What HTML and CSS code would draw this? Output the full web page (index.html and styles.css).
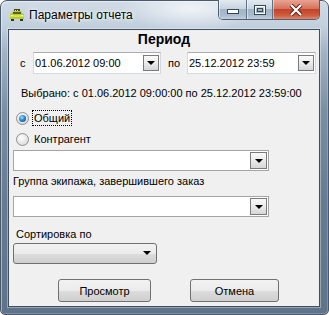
FILE: index.html
```html
<!DOCTYPE html>
<html lang="ru">
<head>
    <meta charset="UTF-8">
    <title>Параметры отчета</title>
    <link rel="stylesheet" href="styles.css">
</head>
<body>
    <div class="window">
        <div class="titlebar">
            <svg class="app-icon" width="16" height="12" viewBox="0 0 16 12">
                <rect x="5" y="0" width="6" height="3" fill="#3d4a1a"/>
                <rect x="6" y="1" width="1" height="1" fill="#e8f070"/>
                <rect x="8" y="1" width="1" height="1" fill="#e8f070"/>
                <path d="M3 4 L4 2 L12 2 L13 4 L15 5 L15 10 L1 10 L1 5 Z" fill="#b9cc2c"/>
                <rect x="4" y="3" width="8" height="2" fill="#55652a"/>
                <rect x="1" y="6" width="14" height="2" fill="#d4e24c"/>
                <rect x="2" y="6" width="2" height="1" fill="#f6f7c0"/>
                <rect x="12" y="6" width="2" height="1" fill="#f6f7c0"/>
                <rect x="2" y="10" width="3" height="2" fill="#2f3a22"/>
                <rect x="11" y="10" width="3" height="2" fill="#2f3a22"/>
            </svg>
            <span class="title">Параметры отчета</span>
            <div class="caption-buttons">
                <div class="cap-btn cap-min">
                    <svg width="12" height="6" viewBox="0 0 12 6"><rect x="0.5" y="0.5" width="11" height="4" fill="#fff" stroke="#33475b"/></svg>
                </div>
                <div class="cap-btn cap-max">
                    <svg width="12" height="10" viewBox="0 0 12 10"><rect x="0.5" y="0.5" width="11" height="9" fill="none" stroke="#33475b"/><rect x="1.5" y="1.5" width="9" height="7" fill="none" stroke="#fff"/><rect x="3.5" y="3.5" width="5" height="3" fill="none" stroke="#33475b"/></svg>
                </div>
                <div class="cap-btn cap-close">
                    <svg width="14" height="12" viewBox="0 0 14 12"><path d="M2 1 L12 11 M12 1 L2 11" stroke="#5a1d14" stroke-width="4"/><path d="M2 1 L12 11 M12 1 L2 11" stroke="#fff" stroke-width="2.2"/></svg>
                </div>
            </div>
        </div>

        <div class="client">
            <h2 class="period">Период</h2>

            <div class="date-row">
                <span class="lbl lbl-from">с</span>
                <div class="date-box"><span>01.06.2012 09:00</span><span class="drop-btn"></span></div>
                <span class="lbl lbl-to">по</span>
                <div class="date-box date-box-to"><span>25.12.2012 23:59</span><span class="drop-btn"></span></div>
            </div>

            <p class="selected">Выбрано: с 01.06.2012 09:00:00 по 25.12.2012 23:59:00</p>

            <div class="radio checked"><span class="dot"></span><span class="radio-text focus">Общий</span></div>
            <div class="radio radio-second"><span class="dot"></span><span class="radio-text">Контрагент</span></div>

            <div class="combo combo-client"><span class="drop-btn"></span></div>

            <p class="caption">Группа экипажа, завершившего заказ</p>
            <div class="combo combo-group"><span class="drop-btn"></span></div>

            <p class="caption caption-sort">Сортировка по</p>
            <div class="dropdown"><span class="arrow"></span></div>

            <div class="actions">
                <button class="btn btn-view">Просмотр</button>
                <button class="btn btn-cancel">Отмена</button>
            </div>
        </div>
    </div>
</body>
</html>
```

FILE: styles.css
```css
html, body {
    margin: 0;
    padding: 0;
    background: #fff;
}
body {
    font-family: 'Liberation Sans', Arial, sans-serif;
    font-size: 11px;
    color: #000;
}
.window {
    box-sizing: border-box;
    width: 329px;
    height: 315px;
    padding: 0 8px 7px 7px;
    display: flex;
    flex-direction: column;
    border: 1px solid #4a5a6c;
    border-radius: 7px 7px 5px 5px;
    background:
        radial-gradient(ellipse 70px 22px at 190px 8px, rgba(255, 255, 255, 0.7), rgba(255, 255, 255, 0) 100%),
        linear-gradient(to bottom, #d0dbe6 0, #c1cfdd 26px, #a3b4c6 50px, #7a8ea3 110px, #667b91 200px, #5f7489 100%);
    box-shadow: inset 1px 1px 0 rgba(255, 255, 255, 0.45), inset -1px -1px 0 rgba(255, 255, 255, 0.2);
}

/* title bar */
.titlebar {
    height: 28px;
    display: flex;
    align-items: flex-start;
    flex-shrink: 0;
}
.app-icon {
    margin: 8px 0 0 1px;
}
.title {
    margin: 6px 0 0 4px;
    font-size: 12px;
    line-height: 16px;
    color: #000;
    text-shadow: 0 0 6px #fff, 0 0 3px #fff;
}
.caption-buttons {
    margin: -1px 0 0 auto;
    display: flex;
    height: 19px;
    border: 1px solid #4f6073;
    border-top: none;
    border-radius: 0 0 5px 5px;
    overflow: hidden;
}
.cap-btn {
    height: 19px;
    display: flex;
    align-items: center;
    justify-content: center;
    box-shadow: inset 1px 0 0 rgba(255, 255, 255, 0.5);
}
.cap-min,
.cap-max {
    border-right: 1px solid #5f7184;
    background: linear-gradient(to bottom, #e2e9f0 0, #c8d4e0 45%, #a3b5c8 50%, #aabbcd 80%, #c3d0dd 100%);
}
.cap-min {
    width: 28px;
    padding-top: 5px;
    box-sizing: border-box;
}
.cap-max {
    width: 25px;
}
.cap-close {
    width: 46px;
    background: linear-gradient(to bottom, #e8a493 0, #d7735c 45%, #c2432b 50%, #cf5a3c 80%, #e0876a 100%);
}

/* client area */
.client {
    flex: 1;
    border: 1px solid #3d4e60;
    background: #f0f0f0;
    box-shadow: 0 0 0 1px rgba(255, 255, 255, 0.35);
}
.period {
    margin: 0;
    height: 18px;
    line-height: 19px;
    font-size: 14px;
    font-weight: bold;
    text-align: center;
}
.date-row {
    margin-top: 4px;
    height: 22px;
    padding-left: 11px;
    display: flex;
    align-items: center;
}
.lbl-from {
    width: 13px;
}
.lbl-to {
    width: 19px;
    margin-left: 7px;
}
.date-box {
    box-sizing: border-box;
    width: 128px;
    height: 22px;
    display: flex;
    align-items: center;
    padding-left: 1px;
    background: #fff;
    border: 1px solid #d5d9e0;
    border-top-color: #abadb3;
}
.date-box-to {
    width: 129px;
}
.drop-btn {
    box-sizing: border-box;
    width: 16px;
    height: 16px;
    margin: 0 1px 0 auto;
    border: 1px solid #7a7a7a;
    background: linear-gradient(to bottom, #fafafa 0, #ebebeb 50%, #d6d6d6 100%);
    position: relative;
}
.drop-btn::after {
    content: "";
    position: absolute;
    left: 3px;
    top: 5px;
    border-left: 4px solid transparent;
    border-right: 4px solid transparent;
    border-top: 4px solid #000;
}
.selected {
    margin: 12px 0 0;
    padding-left: 12px;
    line-height: 14px;
}
.radio {
    margin-top: 11px;
    height: 14px;
    padding-left: 7px;
    display: flex;
    align-items: center;
}
.radio-second {
    margin-top: 7px;
}
.dot {
    box-sizing: border-box;
    width: 13px;
    height: 13px;
    border-radius: 50%;
    border: 1px solid #8e8f8f;
    background: radial-gradient(circle at 40% 35%, #fdfdfd 0, #e6e6e6 55%, #cfcfcf 100%);
    position: relative;
}
.checked .dot::after {
    content: "";
    position: absolute;
    left: 2px;
    top: 2px;
    width: 7px;
    height: 7px;
    border-radius: 50%;
    background: radial-gradient(circle at 40% 35%, #9ee0ff 0, #2a8ad4 45%, #0b3f7a 100%);
}
.radio-text {
    margin-left: 3px;
    padding: 0 1px;
    line-height: 14px;
    border: 1px dotted transparent;
}
.radio-text.focus {
    border-color: #000;
}
.combo {
    box-sizing: border-box;
    width: 256px;
    height: 21px;
    margin-left: 4px;
    display: flex;
    align-items: center;
    background: #fff;
    border: 1px solid #a5a5a5;
}
.combo .drop-btn {
    width: 17px;
    height: 17px;
}
.combo .drop-btn::after {
    left: 4px;
    top: 6px;
}
.combo-client {
    margin-top: 4px;
}
.combo-group {
    margin-top: 8px;
}
.caption {
    margin: 3px 0 0;
    padding-left: 4px;
    line-height: 14px;
}
.caption-sort {
    margin-top: 10px;
    padding-left: 7px;
}
.dropdown {
    box-sizing: border-box;
    width: 144px;
    height: 21px;
    margin: 2px 0 0 4px;
    border: 1px solid #707070;
    border-radius: 3px;
    background: linear-gradient(to bottom, #f2f2f2 0, #ebebeb 50%, #dddddd 51%, #cfcfcf 100%);
    position: relative;
}
.dropdown .arrow {
    position: absolute;
    right: 5px;
    top: 7px;
    border-left: 4px solid transparent;
    border-right: 4px solid transparent;
    border-top: 4px solid #000;
}
.actions {
    margin-top: 15px;
    padding-left: 49px;
    display: flex;
    gap: 39px;
}
.btn {
    box-sizing: border-box;
    height: 23px;
    padding: 0;
    border: 1px solid #707070;
    border-radius: 3px;
    background: linear-gradient(to bottom, #f2f2f2 0, #ebebeb 50%, #dddddd 51%, #cfcfcf 100%);
    font-family: 'Liberation Sans', Arial, sans-serif;
    font-size: 11px;
    color: #000;
}
.btn-view {
    width: 93px;
}
.btn-cancel {
    width: 89px;
}
```
